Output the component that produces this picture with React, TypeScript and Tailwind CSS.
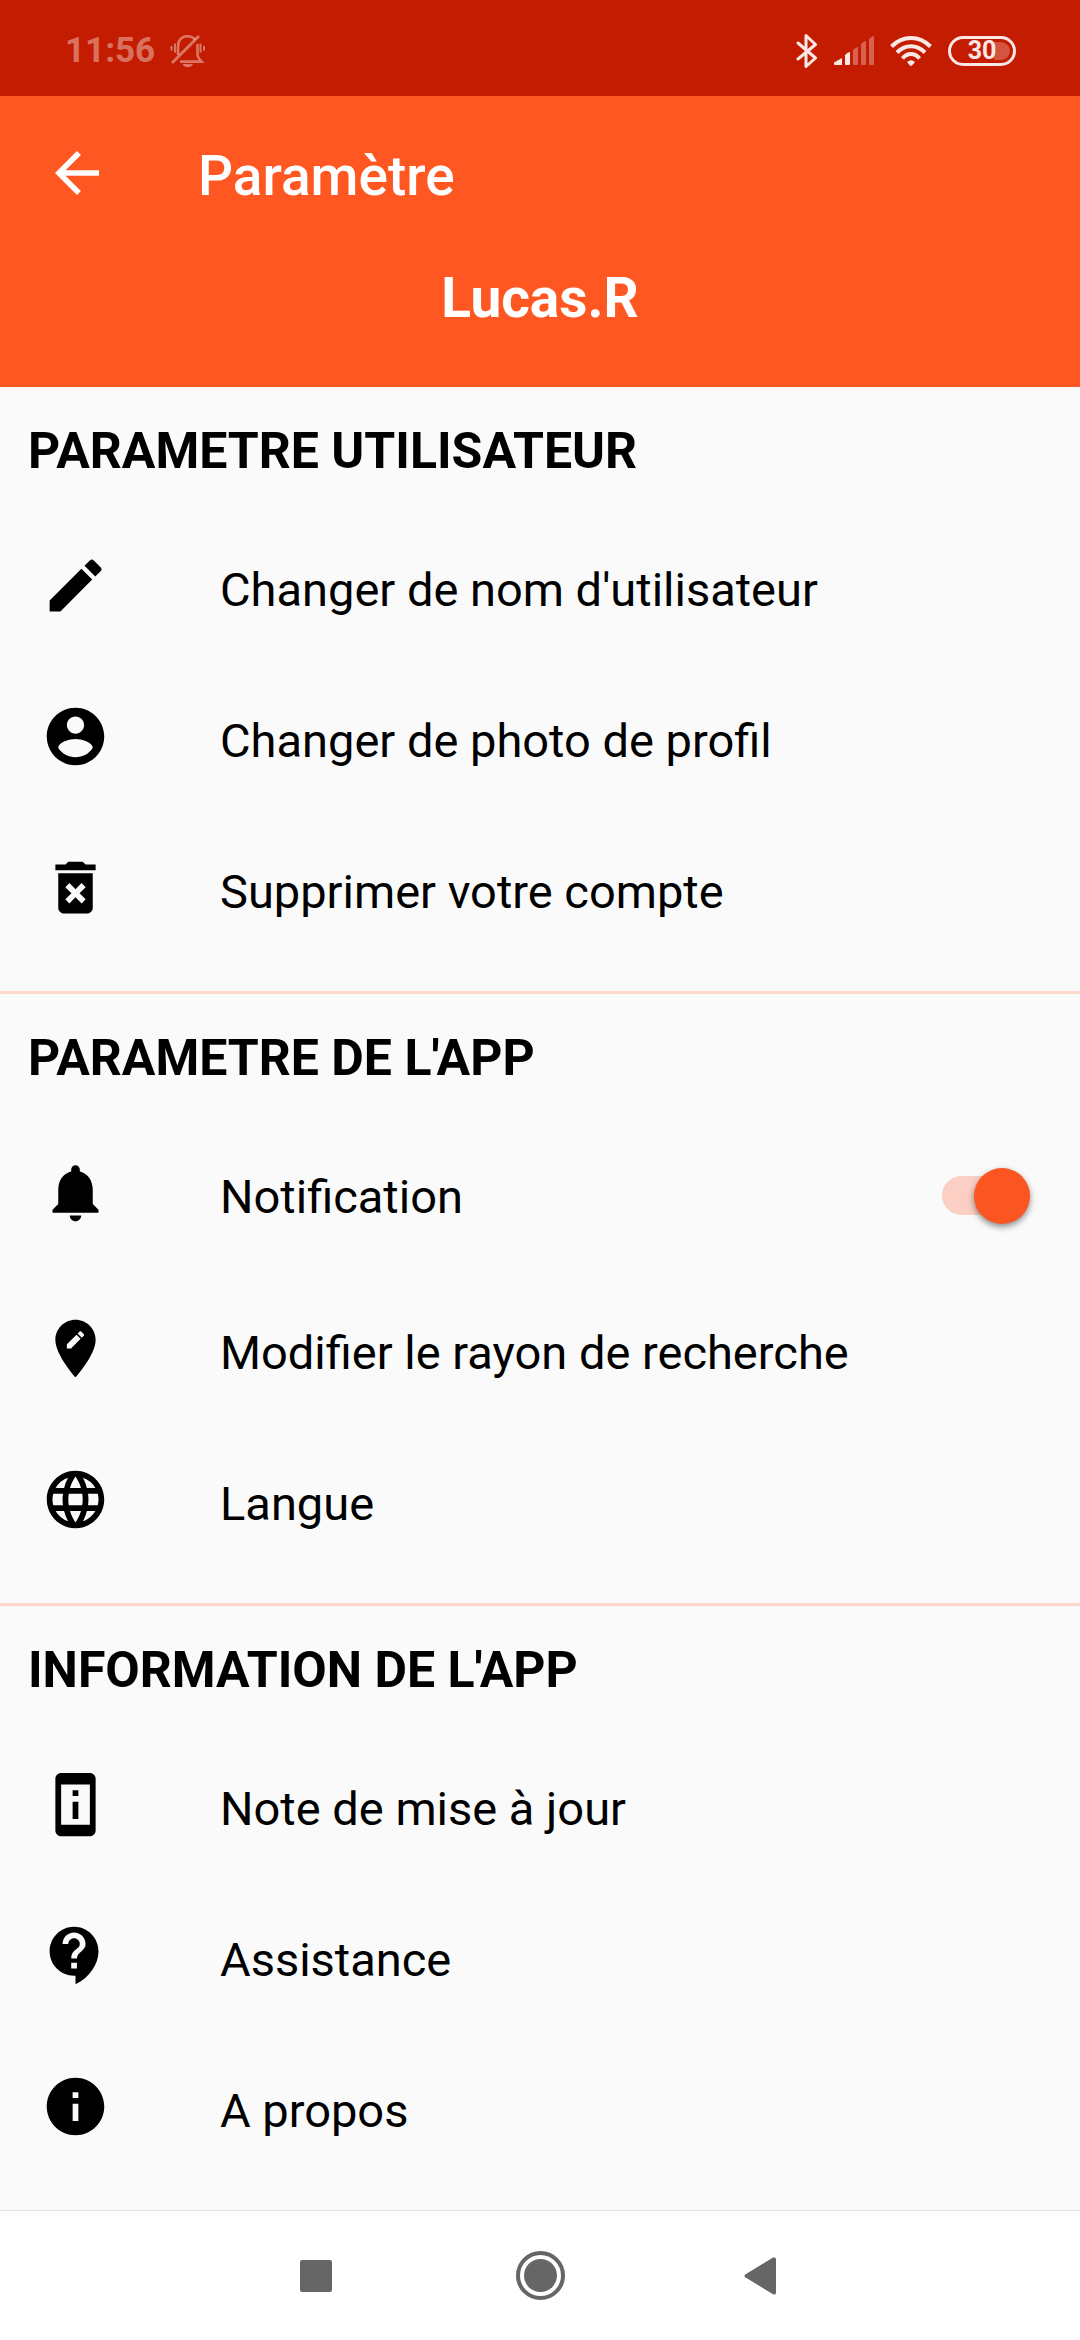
import { useState, type ReactNode } from "react";
import {
  MdArrowBack,
  MdContactSupport,
  MdDeleteForever,
  MdEdit,
  MdInfo,
  MdLanguage,
  MdPermDeviceInformation,
} from "react-icons/md";

function GlyphIcon({ d }: { d: string }) {
  return (
    <svg viewBox="0 0 24 24" className="size-[69px]" fill="currentColor" aria-hidden="true">
      <path d={d} />
    </svg>
  );
}

const accountPath =
  "M12 2C6.48 2 2 6.48 2 12s4.48 10 10 10 10-4.48 10-10S17.52 2 12 2zm0 3c1.66 0 3 1.34 3 3s-1.34 3-3 3-3-1.34-3-3 1.34-3 3-3zm0 14.2c-2.5 0-4.71-1.28-6-3.22.03-1.99 4-3.08 6-3.08 1.99 0 5.97 1.09 6 3.08-1.29 1.94-3.5 3.22-6 3.22z";
const bellPath =
  "M12 22c1.1 0 2-.9 2-2h-4c0 1.1.89 2 2 2zm6-6v-5c0-3.07-1.64-5.64-4.5-6.32V4c0-.83-.67-1.5-1.5-1.5s-1.5.67-1.5 1.5v.68C7.63 5.36 6 7.92 6 11v5l-2 2v1h16v-1l-2-2z";
const editLocationPath =
  "M12 2C8.14 2 5 5.14 5 9c0 5.25 7 13 7 13s7-7.75 7-13c0-3.86-3.14-7-7-7zm-1.56 10H9v-1.44l3.35-3.34 1.43 1.43L10.44 12zm4.45-4.45l-.7.7-1.44-1.44.7-.7c.15-.15.39-.15.54 0l.9.9c.15.15.15.39 0 .54z";

function StatusBar() {
  return (
    <div className="flex h-24 items-center justify-between bg-[#c41c00] pt-1.5 pr-16 pl-[65px] text-white">
      <div className="flex items-center gap-[15px] text-white/40">
        <span className="text-[35px] leading-10 font-bold">11:56</span>
        <svg viewBox="0 0 36 34" className="h-[34px] w-9" fill="none" stroke="currentColor" strokeWidth="2.6" aria-hidden="true">
          <path d="M8 21V13C8 6 12 2.2 17.500 2.200C21 2.200 23.500 3.500 25 5.500M27.500 10V20C27.500 23 29 25 31.500 27.600H10" />
          <path d="M2 29L29 2" strokeWidth="2.800" />
          <path d="M5 9.500V18.500M1.500 12V16.500M30.500 9.500V18.500M34 12V16.500" strokeWidth="2" />
          <path d="M12.500 30H23C22 32.400 20 33.200 17.800 33.200S13.500 32.400 12.500 30Z" fill="currentColor" stroke="none" />
        </svg>
      </div>
      <div className="flex items-center gap-4 text-white/90">
        <svg viewBox="0 0 22 34" className="h-[34px] w-[22px]" fill="none" stroke="currentColor" strokeWidth="3" strokeLinejoin="round" strokeLinecap="round" aria-hidden="true">
          <path d="M2 9L19.500 24L10 32.500V1.500L19.500 10.500L2 25" />
        </svg>
        <svg viewBox="0 0 40 30" className="h-[30px] w-10" fill="currentColor" aria-hidden="true">
          <path d="M0 26.500L8 22V29H1.200Q0 29 0 28Z" />
          <path d="M11 19Q14 16 16 16V28Q16 29 15 29H12Q11 29 11 28Z" />
          <g opacity="0.34">
            <path d="M19 14Q22 11 24 11V28Q24 29 23 29H20Q19 29 19 28Z" />
            <path d="M27 8Q30 5 32 5V28Q32 29 31 29H28Q27 29 27 28Z" />
            <path d="M35 3Q38 0 40 0V28Q40 29 39 29H36Q35 29 35 28Z" />
          </g>
        </svg>
        <svg viewBox="0 0 42 30" className="h-[30px] w-[42px]" fill="none" stroke="currentColor" strokeWidth="4" aria-hidden="true">
          <path d="M1.500 10.500Q10 2 21 2T40.500 10.500" />
          <path d="M7 16.500Q13 10.200 21 10.200T35 16.500" />
          <path d="M12.500 22.500Q16 18 21 18T29.500 22.500" />
          <path d="M17 26Q21 22.500 25 26L22 29.500Q21 30.300 20 29.500Z" fill="currentColor" stroke="none" />
        </svg>
        <div className="relative flex h-[30px] w-[68px] items-center justify-center rounded-full border-3 border-white/90">
          <div className="absolute right-[3px] h-[18px] w-4 rounded-r-full bg-white/25" />
          <span className="relative text-[25px] leading-6 font-bold">30</span>
        </div>
      </div>
    </div>
  );
}

function RowContent({ icon, text }: { icon: ReactNode; text: string }) {
  return (
    <span className="flex h-[151px] flex-1 items-center pl-[41px] text-left">
      <span className="shrink-0">{icon}</span>
      <span className="pt-[9px] pl-[110px] text-[47px] leading-14">{text}</span>
    </span>
  );
}

function Row(props: { icon: ReactNode; text: string }) {
  return (
    <li>
      <button type="button" className="flex w-full">
        <RowContent {...props} />
      </button>
    </li>
  );
}

function Section({ title, children }: { title: string; children: ReactNode }) {
  return (
    <section className="border-[#fdd8cd] pb-7 not-last:border-b-3">
      <h2 className="pt-[35px] pb-[30px] pl-7 text-[50px] leading-[58px] font-bold">{title}</h2>
      <ul>{children}</ul>
    </section>
  );
}

export default function App() {
  const [notify, setNotify] = useState(true);
  return (
    <div className="flex min-h-screen flex-col bg-[#fafafa] font-[Roboto,sans-serif] text-black">
      <StatusBar />
      <header className="bg-[#ff5722] pb-14 text-white">
        <div className="flex h-[154px] items-center pl-11">
          <button type="button" aria-label="Retour">
            <MdArrowBack className="size-[66px]" />
          </button>
          <h1 className="pt-1.5 pl-22 text-[55px] leading-16 font-medium">Paramètre</h1>
        </div>
        <p className="pt-4 text-center text-[55px] leading-[65px] font-bold">Lucas.R</p>
      </header>

      <main className="flex-1">
        <Section title="PARAMETRE UTILISATEUR">
          <Row icon={<MdEdit className="size-[69px]" />} text="Changer de nom d'utilisateur" />
          <Row icon={<GlyphIcon d={accountPath} />} text="Changer de photo de profil" />
          <Row icon={<MdDeleteForever className="size-[69px]" />} text="Supprimer votre compte" />
        </Section>
        <Section title="PARAMETRE DE L'APP">
          <li>
            <label className="flex h-[156px] pr-[50px]">
              <RowContent icon={<GlyphIcon d={bellPath} />} text="Notification" />
              <input
                type="checkbox"
                role="switch"
                checked={notify}
                onChange={(e) => setNotify(e.target.checked)}
                className="relative h-[39px] w-22 appearance-none self-center rounded-full bg-linear-to-r from-[#d5d5d5] from-85% to-transparent to-85% before:absolute before:-top-2 before:left-0 before:size-14 before:rounded-full before:bg-white before:shadow-[0_3px_6px_rgba(0,0,0,0.45)] checked:from-[#fbcfc4] checked:before:left-8 checked:before:bg-[#fb5622]"
              />
            </label>
          </li>
          <Row icon={<GlyphIcon d={editLocationPath} />} text="Modifier le rayon de recherche" />
          <Row icon={<MdLanguage className="size-[69px]" />} text="Langue" />
        </Section>
        <Section title="INFORMATION DE L'APP">
          <Row icon={<MdPermDeviceInformation className="size-[69px]" />} text="Note de mise à jour" />
          <Row icon={<MdContactSupport className="size-[69px]" />} text="Assistance" />
          <Row icon={<MdInfo className="size-[69px]" />} text="A propos" />
        </Section>
      </main>

      <nav className="flex h-[130px] justify-center border-t border-[#e3e3e3] bg-white text-[#666666]">
        <button type="button" aria-label="Applications récentes" className="flex w-56 items-center justify-center">
          <span className="size-8 rounded-xs bg-current" />
        </button>
        <button type="button" aria-label="Accueil" className="flex w-56 items-center justify-center">
          <span className="flex size-[49px] items-center justify-center rounded-full border-4 border-current">
            <span className="size-[33px] rounded-full bg-current" />
          </span>
        </button>
        <button type="button" aria-label="Précédent" className="flex w-56 items-center justify-center">
          <svg viewBox="0 0 40 38" className="h-[38px] w-10" fill="currentColor" aria-hidden="true">
            <path d="M1.200 17.600L29 .6Q32 0 32 2V36Q32 38 29 37.200L1.200 20.200Q-.2 19 1.200 17.600Z" />
          </svg>
        </button>
      </nav>
    </div>
  );
}
